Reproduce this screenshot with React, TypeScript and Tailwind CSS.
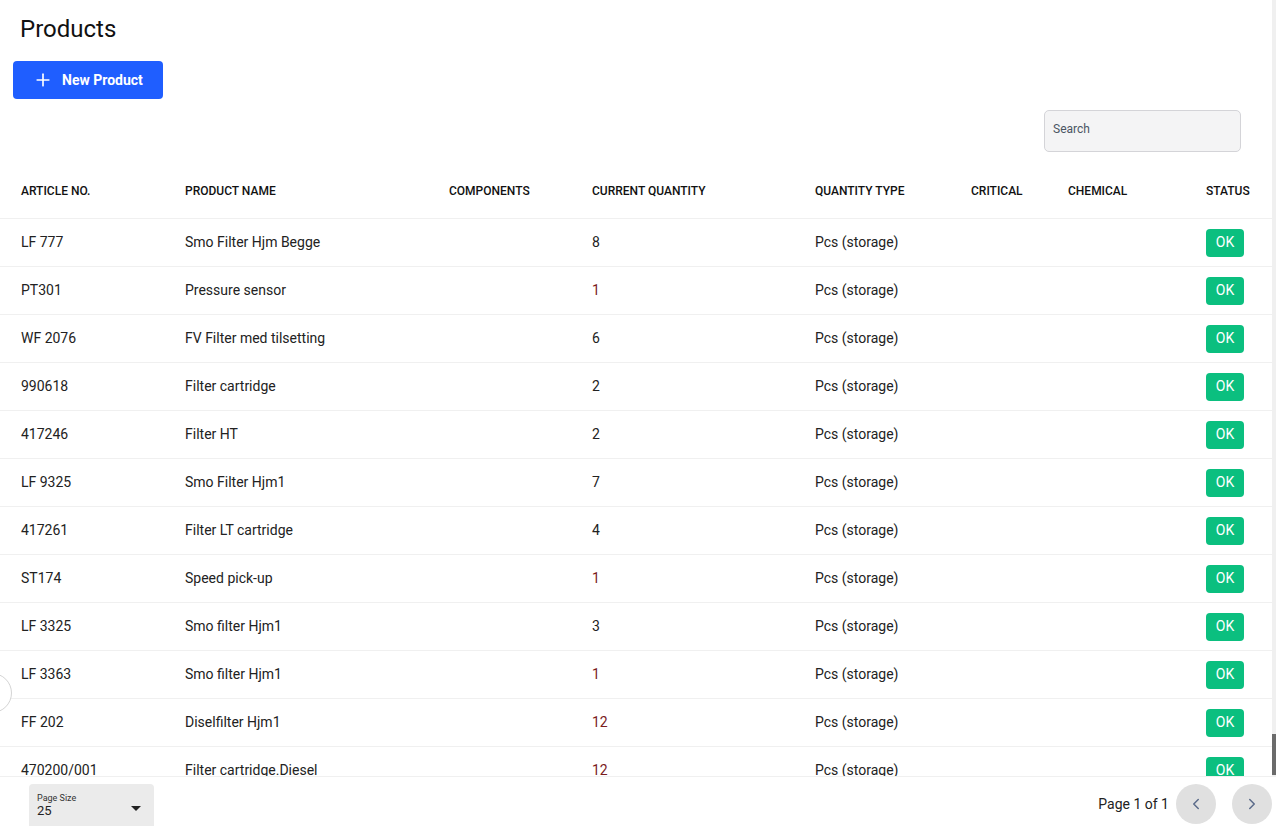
import { Plus, ChevronLeft, ChevronRight } from 'lucide-react';

const ROWS = [
  { no: 'LF 777', name: 'Smo Filter Hjm Begge', qty: 8 },
  { no: 'PT301', name: 'Pressure sensor', qty: 1 },
  { no: 'WF 2076', name: 'FV Filter med tilsetting', qty: 6 },
  { no: '990618', name: 'Filter cartridge', qty: 2 },
  { no: '417246', name: 'Filter HT', qty: 2 },
  { no: 'LF 9325', name: 'Smo Filter Hjm1', qty: 7 },
  { no: '417261', name: 'Filter LT cartridge', qty: 4 },
  { no: 'ST174', name: 'Speed pick-up', qty: 1 },
  { no: 'LF 3325', name: 'Smo filter Hjm1', qty: 3 },
  { no: 'LF 3363', name: 'Smo filter Hjm1', qty: 1 },
  { no: 'FF 202', name: 'Diselfilter Hjm1', qty: 12 },
  { no: '470200/001', name: 'Filter cartridge.Diesel', qty: 12 },
];

const HEADERS = ['Article No.', 'Product Name', 'Components', 'Current Quantity', 'Quantity Type', 'Critical', 'Chemical', 'Status'];

const cols = 'grid grid-cols-[164px_264px_143px_223px_156px_97px_138px_1fr] pl-[21px]';

export default function App() {
  return (
    <div className="h-[830px] w-full flex flex-col bg-white text-[#222] overflow-hidden relative" style={{ fontFamily: 'Roboto, "Liberation Sans", sans-serif' }}>
      <div className="flex flex-1 min-h-0">
        <div className="flex-1 min-w-0 overflow-hidden">
          <h1 className="pl-[20px] pt-[14px] text-[24px] leading-[30px] text-[#111]">Products</h1>
          <div className="pl-[13px] pt-[17px]">
            <button className="h-[38px] w-[150px] bg-[#1f5eff] rounded-[4px] flex items-center pl-[20px] gap-[9px] text-white text-[14px] font-bold">
              <Plus size={20} strokeWidth={2} />
              New Product
            </button>
          </div>
          <div className="flex justify-end pr-[31px] pt-[11px]">
            <div className="w-[197px] h-[42px] bg-[#f4f4f5] border border-[#d4d4d8] rounded-[5px] px-[8px] pt-[9px] text-[12px] text-[#4b5563]">
              Search
            </div>
          </div>
          <div className={`${cols} items-start h-[67px] pt-[32px] border-b border-[#f0f0f0] text-[12px] leading-[14px] font-medium uppercase text-[#111]`}>
            {HEADERS.map(h => (
              <div key={h}>{h}</div>
            ))}
          </div>
          {ROWS.map(r => (
            <div key={r.no} className={`${cols} items-center h-[48px] border-b border-[#f0f0f0] text-[14px]`}>
              <div>{r.no}</div>
              <div>{r.name}</div>
              <div></div>
              <div className={r.qty === 1 || r.qty === 12 ? 'text-[#7a1c1c]' : ''}>{r.qty}</div>
              <div>Pcs (storage)</div>
              <div></div>
              <div></div>
              <div>
                <span className="inline-flex items-center justify-center w-[38px] h-[28px] rounded-[4px] bg-[#0bbf7f] text-white text-[14px] font-normal">OK</span>
              </div>
            </div>
          ))}
        </div>
        <div className="w-[4px] bg-[#f0f0f0] flex flex-col justify-end">
          <div className="h-[41px] bg-[#6b6b6b] mb-[1px]"></div>
        </div>
      </div>
      <div className="h-[54px] border-t border-[#f0f0f0] flex items-start justify-between pl-[29px] pr-[4px]">
        <div className="w-[125px] h-[42px] bg-[#ebebeb] rounded-t-[4px] relative pl-[8px] pt-[9px] mt-[7px]">
          <div className="text-[9px] leading-[10px] text-[#333]">Page Size</div>
          <div className="text-[13px] leading-[16px] text-[#222]">25</div>
          <span className="absolute right-[13px] top-[22px] w-0 h-0 border-l-[5px] border-r-[5px] border-t-[5px] border-l-transparent border-r-transparent border-t-[#222]"></span>
        </div>
        <div className="flex items-center mt-[7px]">
          <span className="text-[14px] text-[#222] mr-[7px]">Page 1 of 1</span>
          <button className="w-[40px] h-[40px] rounded-full bg-[#e0e0e0] flex items-center justify-center text-[#5b6b8a]">
            <ChevronLeft size={18} strokeWidth={2} />
          </button>
          <button className="w-[40px] h-[40px] rounded-full bg-[#e0e0e0] flex items-center justify-center text-[#5b6b8a] ml-[16px]">
            <ChevronRight size={18} strokeWidth={2} />
          </button>
        </div>
      </div>
      <div className="absolute left-[-28px] top-[673px] w-[40px] h-[40px] rounded-full border border-[#d4d4d4] bg-white"></div>
    </div>
  );
}
